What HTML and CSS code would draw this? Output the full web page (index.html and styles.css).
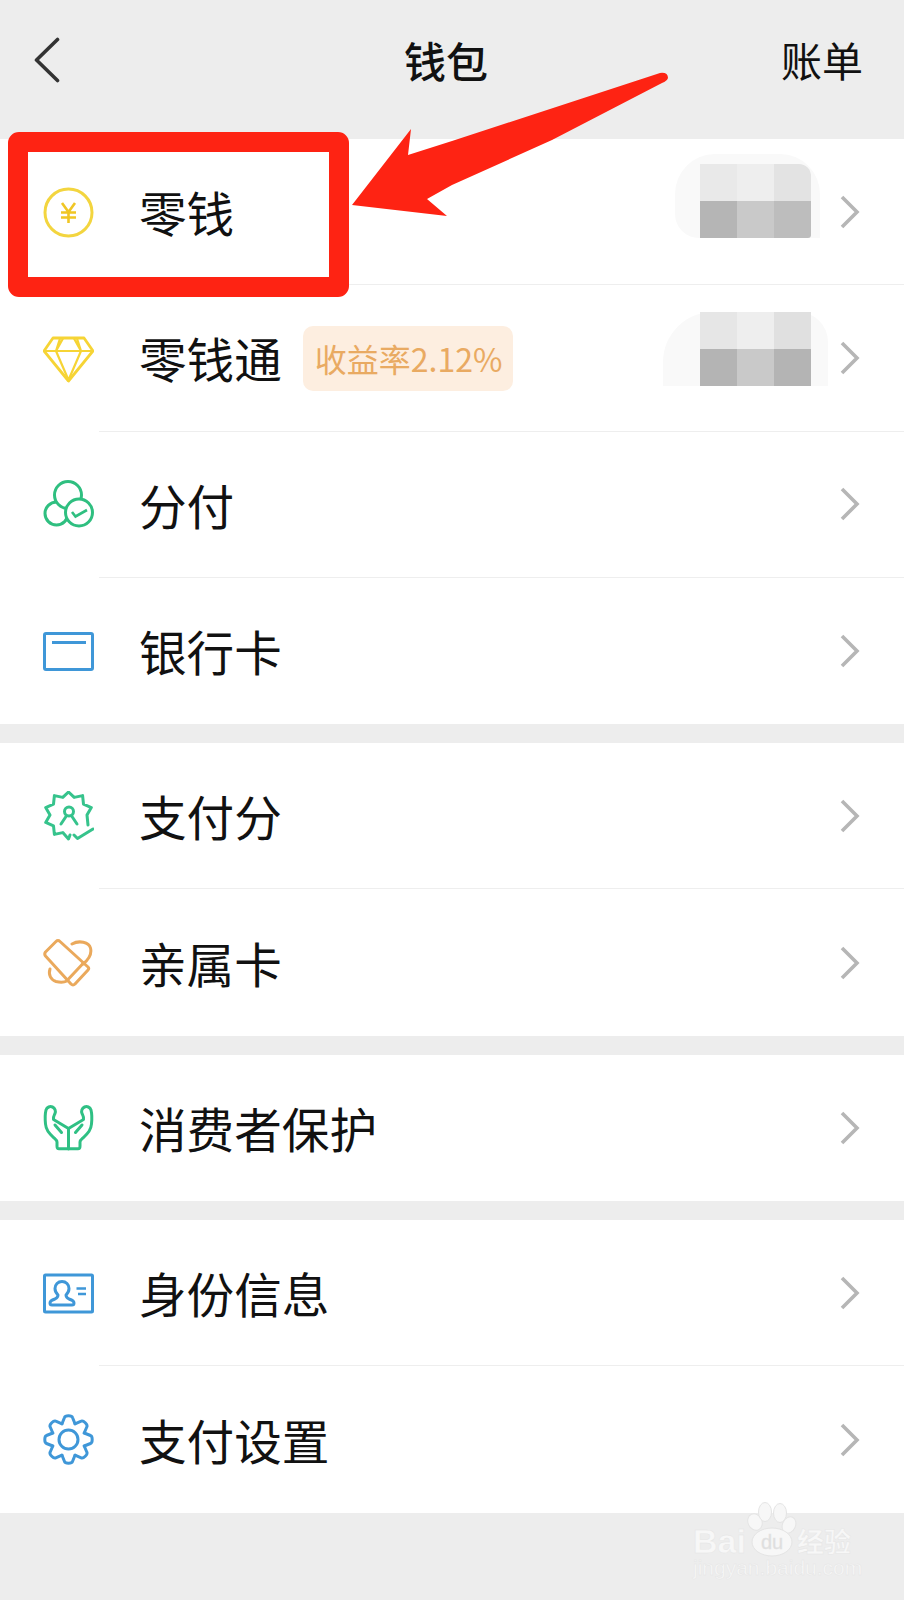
FILE: index.html
```html
<!DOCTYPE html>
<html>

<head>
    <title>钱包</title>
    <meta name="viewport" content="width=device-width, initial-scale=1.0">
    <link rel="stylesheet" href="styles.css">
</head>

<body>
    <!-- Top bar -->
    <header class="topbar">
        <svg class="back" width="26" height="46" viewBox="0 0 26 46" fill="none" stroke="#333" stroke-width="3.6"
            stroke-linecap="round" stroke-linejoin="round">
            <path d="M23.5 2.5L2.5 23L23.5 43.5"></path>
        </svg>
        <h1 class="topbar-title">钱包</h1>
        <span class="topbar-link">账单</span>
    </header>

    <section class="group">
        <div class="row">
            <!-- Yen coin -->
            <svg class="icon" viewBox="0 0 51 51" fill="none" stroke="#f3d53f" stroke-width="3">
                <circle cx="25.5" cy="25.5" r="23.5"></circle>
                <path d="M19 16L25.5 25L32 16M25.5 25V36M18 25.5H33M18 30.5H33" stroke="#f0c625" stroke-width="2.6"></path>
            </svg>
            <div class="row-main">
                <span class="row-label">零钱</span>
                <div class="blur blur-small">
                    <div class="mosaic mosaic-round">
                        <i class="c1"></i><i class="c2"></i><i class="c3"></i>
                        <i class="c4"></i><i class="c5"></i><i class="c6"></i>
                    </div>
                </div>
                <svg class="chevron" viewBox="0 0 20 34" fill="none" stroke="#b6b6b6" stroke-width="3.6">
                    <path d="M2 2L17 17L2 32"></path>
                </svg>
            </div>
        </div>
        <div class="row">
            <!-- Diamond -->
            <svg class="icon icon-low" viewBox="0 0 51 51" fill="none" stroke="#f6d435" stroke-width="2.8"
                stroke-linejoin="round">
                <path d="M10 4H41L50 17L25.5 47L1 17Z"></path>
                <path d="M1 17H50M17 4.5L13 17L25.5 46L38 17L34 4.5M13 17L20 4.5M38 17L31 4.5" stroke-width="2.2"></path>
            </svg>
            <div class="row-main">
                <span class="row-label">零钱通</span>
                <span class="badge">收益率2.12%</span>
                <div class="blur blur-wide">
                    <div class="mosaic">
                        <i class="c7"></i><i class="c2"></i><i class="c8"></i>
                        <i class="c9"></i><i class="c5"></i><i class="c9"></i>
                    </div>
                </div>
                <svg class="chevron" viewBox="0 0 20 34" fill="none" stroke="#b6b6b6" stroke-width="3.6">
                    <path d="M2 2L17 17L2 32"></path>
                </svg>
            </div>
        </div>
        <div class="row">
            <!-- Three circles with a tick -->
            <svg class="icon" viewBox="0 0 51 51" fill="#fff" stroke="#2fbf80" stroke-width="3">
                <circle cx="13.5" cy="34.5" r="11.5"></circle>
                <circle cx="25" cy="16" r="13.5"></circle>
                <circle cx="36" cy="33.5" r="13.5"></circle>
                <path d="M29 33L32.5 37.5L44 31" fill="none" stroke-width="2.6"></path>
            </svg>
            <div class="row-main">
                <span class="row-label">分付</span>
                <svg class="chevron" viewBox="0 0 20 34" fill="none" stroke="#b6b6b6" stroke-width="3.6">
                    <path d="M2 2L17 17L2 32"></path>
                </svg>
            </div>
        </div>
        <div class="row">
            <!-- Bank card -->
            <svg class="icon" viewBox="0 0 51 51" fill="none" stroke="#3f97d8" stroke-width="3">
                <rect x="1.5" y="7.5" width="48" height="36" rx="1.5"></rect>
                <path d="M9 16.5H43"></path>
            </svg>
            <div class="row-main">
                <span class="row-label">银行卡</span>
                <svg class="chevron" viewBox="0 0 20 34" fill="none" stroke="#b6b6b6" stroke-width="3.6">
                    <path d="M2 2L17 17L2 32"></path>
                </svg>
            </div>
        </div>
    </section>

    <section class="group">
        <div class="row">
            <!-- Score badge -->
            <svg class="icon" viewBox="0 0 51 51" fill="none" stroke="#36c38c" stroke-width="3" stroke-linecap="round"
                stroke-linejoin="round">
                <path
                    d="M45 34L44 24L48.3 16.6L40.5 13.1L39.6 4.6L31.2 6.4L25.5 1L19.8 6.4L11.4 4.6L10.5 13.1L2.7 16.6L7 24L2.7 31.4L10.5 34.9L11.4 43.4L19.8 41.6L25.5 48L27 44">
                </path>
                <circle cx="26" cy="20.5" r="4.5"></circle>
                <path d="M23 25.5L18 33M29 25.5L34 33"></path>
                <path d="M31 44L34.5 47.5L50 38"></path>
            </svg>
            <div class="row-main">
                <span class="row-label">支付分</span>
                <svg class="chevron" viewBox="0 0 20 34" fill="none" stroke="#b6b6b6" stroke-width="3.6">
                    <path d="M2 2L17 17L2 32"></path>
                </svg>
            </div>
        </div>
        <div class="row">
            <!-- Family card -->
            <svg class="icon" viewBox="0 0 51 51" fill="none" stroke="#eaa95c" stroke-width="3" stroke-linecap="round"
                stroke-linejoin="round">
                <path d="M13 4.5Q15 2.5 17 4.5L45 30Q46.5 31.5 45 33L32 47Q30 49 28 47L2.5 19Q1 17 2.5 15Z"></path>
                <path d="M25 42.5L40.5 26"></path>
                <path d="M29 7C36 3 46 5 47.5 11C49 17 45 23 40 27"></path>
                <path d="M7 32C5 38 8 43 13 44.5C17 45.5 21 45.5 24 44"></path>
            </svg>
            <div class="row-main">
                <span class="row-label">亲属卡</span>
                <svg class="chevron" viewBox="0 0 20 34" fill="none" stroke="#b6b6b6" stroke-width="3.6">
                    <path d="M2 2L17 17L2 32"></path>
                </svg>
            </div>
        </div>
    </section>

    <section class="group">
        <div class="row">
            <!-- Open hands -->
            <svg class="icon" viewBox="0 0 51 51" fill="none" stroke="#2fc084" stroke-width="3" stroke-linecap="round"
                stroke-linejoin="round">
                <path
                    d="M25.5 46.8H16C14.5 46.8 14 46 14 44V40C14 38 12 37 10 35C6 31 3 28 2.5 22C2 17 2 12 3 8C4 5 7 4 9.5 5C12 6 13 9 12 11.5C11 13.5 10 15 10.5 17.5L25.5 26.5">
                </path>
                <path
                    d="M25.5 46.8H35C36.5 46.8 37 46 37 44V40C37 38 39 37 41 35C45 31 48 28 48.5 22C49 17 49 12 48 8C47 5 44 4 41.5 5C39 6 38 9 39 11.5C40 13.5 41 15 40.5 17.5L25.5 26.5">
                </path>
                <path d="M25.5 26.5V46.8"></path>
                <path d="M12 23L18.5 30.5M39 23L32.5 30.5"></path>
            </svg>
            <div class="row-main">
                <span class="row-label">消费者保护</span>
                <svg class="chevron" viewBox="0 0 20 34" fill="none" stroke="#b6b6b6" stroke-width="3.6">
                    <path d="M2 2L17 17L2 32"></path>
                </svg>
            </div>
        </div>
    </section>

    <section class="group">
        <div class="row">
            <!-- ID card -->
            <svg class="icon" viewBox="0 0 51 51" fill="none" stroke="#3f97d8" stroke-width="3"
                stroke-linejoin="round">
                <rect x="1.5" y="7" width="48" height="37" rx="1"></rect>
                <path
                    d="M19 13.5C15 13.5 12 16.5 12 20.5C12 23.5 13.5 25.5 15 27C15 29 14 30 12 31C9 32 7 33 7 35C7 36.5 8 37 9 37H29C30 37 31 36.5 31 35C31 33 29 32 26 31C24 30 23 29 23 27C24.5 25.5 26 23.5 26 20.5C26 16.5 23 13.5 19 13.5Z">
                </path>
                <path d="M33.5 20.5H43M35 26H43" stroke-width="2.6"></path>
            </svg>
            <div class="row-main">
                <span class="row-label">身份信息</span>
                <svg class="chevron" viewBox="0 0 20 34" fill="none" stroke="#b6b6b6" stroke-width="3.6">
                    <path d="M2 2L17 17L2 32"></path>
                </svg>
            </div>
        </div>
        <div class="row">
            <!-- Gear -->
            <svg class="icon" viewBox="0 0 51 51" fill="none" stroke="#3f97d8" stroke-width="3" stroke-linejoin="round"
                stroke-linecap="round">
                <defs>
                    <path id="tooth" d="M19 9.8L21.5 3.5C22 2 23 1.8 25.5 1.8C28 1.8 29 2 29.5 3.5L32 9.8"></path>
                </defs>
                <use href="#tooth"></use>
                <use href="#tooth" transform="rotate(45 25.5 25.5)"></use>
                <use href="#tooth" transform="rotate(90 25.5 25.5)"></use>
                <use href="#tooth" transform="rotate(135 25.5 25.5)"></use>
                <use href="#tooth" transform="rotate(180 25.5 25.5)"></use>
                <use href="#tooth" transform="rotate(225 25.5 25.5)"></use>
                <use href="#tooth" transform="rotate(270 25.5 25.5)"></use>
                <use href="#tooth" transform="rotate(315 25.5 25.5)"></use>
                <circle cx="25.5" cy="25.5" r="9.5"></circle>
            </svg>
            <div class="row-main">
                <span class="row-label">支付设置</span>
                <svg class="chevron" viewBox="0 0 20 34" fill="none" stroke="#b6b6b6" stroke-width="3.6">
                    <path d="M2 2L17 17L2 32"></path>
                </svg>
            </div>
        </div>
    </section>

    <!-- Red marks drawn over the screenshot -->
    <div class="mark-box"></div>
    <svg class="mark-arrow" width="904" height="300" viewBox="0 0 904 300" fill="#fe2313">
        <path
            d="M352 205L411 129L408 155L452 141L660 73Q668 72 668 78Q667 81 662 83L552 140L452 185L427 199L447 216Z">
        </path>
    </svg>

    <!-- Watermark -->
    <svg class="watermark" width="244" height="120" viewBox="0 0 244 120">
        <g fill="#f7f7f7" stroke="#e4e4e4" stroke-width="1">
            <ellipse cx="95" cy="42" rx="7" ry="8.500" transform="rotate(-25 95 42)"></ellipse>
            <ellipse cx="105" cy="32" rx="6.500" ry="9.500"></ellipse>
            <ellipse cx="120" cy="33" rx="6.500" ry="9.500"></ellipse>
            <ellipse cx="129" cy="45" rx="6.500" ry="8.500" transform="rotate(25 129 45)"></ellipse>
            <ellipse cx="112" cy="62" rx="20" ry="14"></ellipse>
        </g>
        <text class="wm-bai" x="33" y="73">Bai</text>
        <text class="wm-du" x="101" y="69">du</text>
        <text class="wm-cn" x="137" y="72">经验</text>
        <text class="wm-url" x="33" y="95">jingyan.baidu.com</text>
    </svg>
</body>

</html>
```

FILE: styles.css
```css
body {
    font-family: "Noto Sans CJK SC", "Noto Sans", sans-serif;
    background-color: #ededed;
    color: #111;
    min-height: 1600px;
    margin: 0;
    padding: 0;
    position: relative;
    overflow-x: hidden;
}

.topbar {
    display: flex;
    align-items: center;
    justify-content: space-between;
    box-sizing: border-box;
    height: 139px;
    padding: 0 41px 19px 34px;
    position: relative;
}

.back {
    display: block;
}

.topbar-title {
    position: absolute;
    left: 0;
    right: 12px;
    top: 35px;
    margin: 0;
    text-align: center;
    font-size: 42px;
    font-weight: 500;
    line-height: 1.2;
}

.topbar-link {
    font-size: 41px;
    line-height: 1.2;
}

.group {
    background-color: white;
    margin-bottom: 19px;
}

.row {
    display: flex;
    align-items: center;
    box-sizing: border-box;
    height: 146.3px;
    padding-left: 43px;
}

.icon {
    width: 51px;
    height: 51px;
    flex-shrink: 0;
}

.icon-low {
    margin-top: 3px;
}

.row-main {
    display: flex;
    align-items: center;
    flex: 1;
    box-sizing: border-box;
    height: 100%;
    margin-left: 5px;
    padding: 0 44px 0 40px;
    border-bottom: 1px solid #eee;
}

.row:last-child .row-main {
    border-bottom: none;
}

.row-label {
    font-size: 47.6px;
    line-height: 1.2;
}

.badge {
    background-color: #fdeee0;
    color: #e9aa62;
    border-radius: 10px;
    font-size: 32px;
    line-height: 65px;
    padding: 0 11px 0 12px;
    margin-left: 21px;
    margin-top: 2px;
    white-space: nowrap;
}

.chevron {
    width: 20px;
    height: 34px;
    flex-shrink: 0;
    margin-left: auto;
}

.blur {
    background-color: #f9f9f9;
    margin-left: auto;
}

.blur + .chevron {
    margin-left: 0;
}

.blur-small {
    padding: 10px 9px 0 25px;
    border-radius: 40px 40px 0 24px;
    margin-bottom: 31px;
    margin-right: 20px;
}

.blur-wide {
    padding: 0 17px 0 37px;
    border-radius: 50px 30px 0 0;
    margin-bottom: 18px;
    margin-right: 12px;
}

.mosaic {
    display: grid;
    grid-template-columns: repeat(3, 37px);
    grid-auto-rows: 37px;
}

.mosaic-round {
    border-radius: 0 12px 3px 0;
    overflow: hidden;
}

.c1 { background-color: #e9e9e9; }
.c2 { background-color: #eeeeee; }
.c3 { background-color: #e3e3e3; }
.c4 { background-color: #b5b5b5; }
.c5 { background-color: #c9c9c9; }
.c6 { background-color: #bdbdbd; }
.c7 { background-color: #e6e6e6; }
.c8 { background-color: #e0e0e0; }
.c9 { background-color: #b4b4b4; }

/* Red marks */
.mark-box {
    position: absolute;
    left: 8px;
    top: 132px;
    box-sizing: border-box;
    width: 341px;
    height: 165px;
    border: 20px solid #fe2313;
    border-radius: 11px;
}

.mark-arrow {
    position: absolute;
    left: 0;
    top: 0;
}

/* Watermark */
.watermark {
    position: absolute;
    right: 0;
    top: 1480px;
}

.watermark text {
    fill: #f7f7f7;
    stroke: #e4e4e4;
    stroke-width: 0.4px;
}

.wm-bai {
    font-family: "Liberation Sans", sans-serif;
    font-size: 34px;
    font-weight: 700;
}

.watermark .wm-du {
    font-family: "Liberation Sans", sans-serif;
    font-size: 20px;
    fill: #dedede;
}

.wm-cn {
    font-size: 27px;
    font-weight: 700;
}

.wm-url {
    font-family: "Liberation Sans", sans-serif;
    font-size: 21px;
}
```
